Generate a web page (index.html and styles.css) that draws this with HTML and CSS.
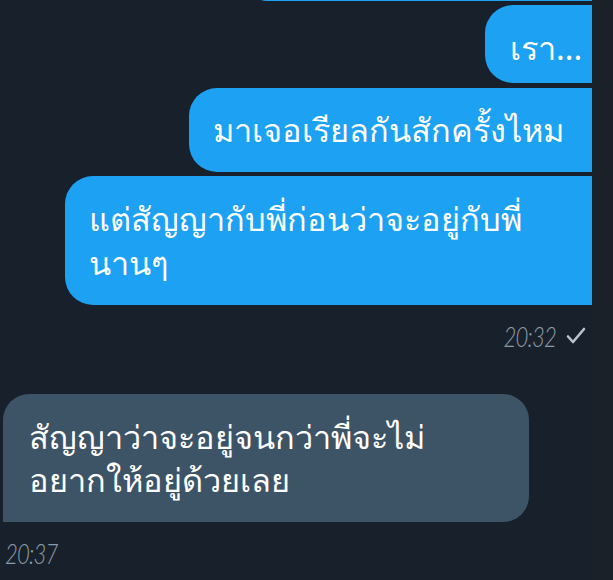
FILE: index.html
```html
<!DOCTYPE html>
<html lang="th">
<head>
<meta charset="utf-8">
<link rel="stylesheet" href="styles.css">
</head>
<body>
<div class="screen">
  <div class="chat">
    <div class="bubble sent prev"></div>
    <div class="bubble sent b-short"><span>เรา...</span></div>
    <div class="bubble sent b-mid"><span>มาเจอเรียลกันสักครั้งไหม</span></div>
    <div class="bubble sent b-long"><span>แต่สัญญากับพี่ก่อนว่าจะอยู่กับพี่<br>นานๆ</span></div>
    <div class="meta sent-meta">
      <span class="time">20:32</span>
      <svg class="check" width="20" height="18" viewBox="0 0 20 18"><polyline points="2,9.5 7,15 18,2" fill="none" stroke="#b9c3cc" stroke-width="2.6" stroke-linecap="round" stroke-linejoin="round"/></svg>
    </div>
    <div class="bubble recv"><span>สัญญาว่าจะอยู่จนกว่าพี่จะไม่<br>อยากให้อยู่ด้วยเลย</span></div>
    <div class="meta recv-meta"><span class="time">20:37</span></div>
  </div>
  <div class="edge"></div>
</div>
</body>
</html>
```

FILE: styles.css
```css
html, body {
  margin: 0;
  padding: 0;
  background: #18212b;
  overflow: hidden;
}
.screen {
  display: flex;
  width: 613px;
  height: 580px;
}
.chat {
  flex: 1;
  display: flex;
  flex-direction: column;
  align-items: flex-end;
}
.edge {
  width: 21px;
  background: #1a2129;
}
.bubble {
  box-sizing: border-box;
  display: flex;
  flex-direction: column;
  justify-content: center;
  color: #ffffff;
  font-family: "Noto Sans", "DejaVu Sans", sans-serif;
  font-size: 32.5px;
  line-height: 43.5px;
  padding: 0 20px 0 24px;
  white-space: nowrap;
}
.sent {
  background: #1da1f2;
  border-radius: 28px 0 0 28px;
}
.prev {
  width: 345px;
  height: 40px;
  margin-top: -39px;
}
.b-short {
  width: 107px;
  height: 78px;
  margin-top: 4px;
  padding-left: 25px;
  padding-top: 8px;
}
.b-mid {
  width: 403px;
  height: 84px;
  margin-top: 5px;
}
.b-long {
  width: 527px;
  height: 129px;
  margin-top: 4px;
}
.meta {
  display: flex;
  align-items: center;
  gap: 10px;
  font-family: "Lato", sans-serif;
  font-style: italic;
  font-weight: 300;
  font-size: 27px;
  letter-spacing: -1px;
  color: #8b9aa8;
  height: 30px;
}
.time {
  display: inline-block;
  transform: scaleX(0.82);
  transform-origin: right center;
}
.sent-meta {
  margin-top: 16px;
  margin-right: 6px;
}
.check {
  display: block;
}
.recv {
  align-self: flex-start;
  margin-left: 3px;
  margin-top: 43px;
  width: 526px;
  height: 128px;
  background: #3d5366;
  border-radius: 26px 26px 26px 0;
  padding-left: 26px;
}
.recv-meta {
  align-self: flex-start;
  margin-left: 5px;
  margin-top: 16px;
}
.recv-meta .time {
  transform-origin: left center;
}
```
